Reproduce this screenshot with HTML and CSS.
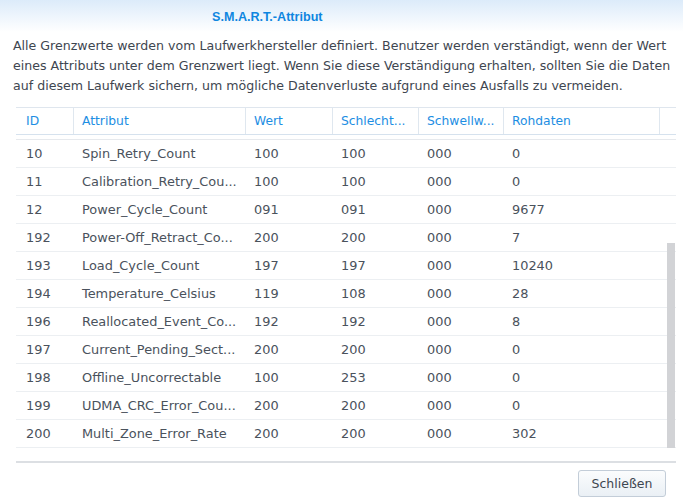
FILE: index.html
```html
<!DOCTYPE html>
<html lang="de">
<head>
<meta charset="utf-8">
<link rel="stylesheet" href="styles.css">
</head>
<body>
<div class="dialog">
  <div class="header"><span class="title">S.M.A.R.T.-Attribut</span></div>
  <p class="desc">Alle Grenzwerte werden vom Laufwerkhersteller definiert. Benutzer werden verständigt, wenn der Wert<br>eines Attributs unter dem Grenzwert liegt. Wenn Sie diese Verständigung erhalten, sollten Sie die Daten<br>auf diesem Laufwerk sichern, um mögliche Datenverluste aufgrund eines Ausfalls zu vermeiden.</p>
  <div class="grid">
    <div class="row head">
      <div class="cell">ID</div><div class="cell">Attribut</div><div class="cell">Wert</div><div class="cell">Schlecht...</div><div class="cell">Schwellw...</div><div class="cell">Rohdaten</div><div class="cell last"></div>
    </div>
    <div class="body">
      <div class="row"><div class="cell">10</div><div class="cell">Spin_Retry_Count</div><div class="cell">100</div><div class="cell">100</div><div class="cell">000</div><div class="cell">0</div><div class="cell"></div></div>
      <div class="row"><div class="cell">11</div><div class="cell">Calibration_Retry_Cou...</div><div class="cell">100</div><div class="cell">100</div><div class="cell">000</div><div class="cell">0</div><div class="cell"></div></div>
      <div class="row"><div class="cell">12</div><div class="cell">Power_Cycle_Count</div><div class="cell">091</div><div class="cell">091</div><div class="cell">000</div><div class="cell">9677</div><div class="cell"></div></div>
      <div class="row"><div class="cell">192</div><div class="cell">Power-Off_Retract_Co...</div><div class="cell">200</div><div class="cell">200</div><div class="cell">000</div><div class="cell">7</div><div class="cell"></div></div>
      <div class="row"><div class="cell">193</div><div class="cell">Load_Cycle_Count</div><div class="cell">197</div><div class="cell">197</div><div class="cell">000</div><div class="cell">10240</div><div class="cell"></div></div>
      <div class="row"><div class="cell">194</div><div class="cell">Temperature_Celsius</div><div class="cell">119</div><div class="cell">108</div><div class="cell">000</div><div class="cell">28</div><div class="cell"></div></div>
      <div class="row"><div class="cell">196</div><div class="cell">Reallocated_Event_Co...</div><div class="cell">192</div><div class="cell">192</div><div class="cell">000</div><div class="cell">8</div><div class="cell"></div></div>
      <div class="row"><div class="cell">197</div><div class="cell">Current_Pending_Sect...</div><div class="cell">200</div><div class="cell">200</div><div class="cell">000</div><div class="cell">0</div><div class="cell"></div></div>
      <div class="row"><div class="cell">198</div><div class="cell">Offline_Uncorrectable</div><div class="cell">100</div><div class="cell">253</div><div class="cell">000</div><div class="cell">0</div><div class="cell"></div></div>
      <div class="row"><div class="cell">199</div><div class="cell">UDMA_CRC_Error_Cou...</div><div class="cell">200</div><div class="cell">200</div><div class="cell">000</div><div class="cell">0</div><div class="cell"></div></div>
      <div class="row"><div class="cell">200</div><div class="cell">Multi_Zone_Error_Rate</div><div class="cell">200</div><div class="cell">200</div><div class="cell">000</div><div class="cell">302</div><div class="cell"></div></div>
      <div class="scrollbar"></div>
    </div>
  </div>
  <div class="footer"><button class="btn">Schließen</button></div>
</div>
</body>
</html>
```
FILE: styles.css
```css
html, body { margin: 0; padding: 0; background: #fff; }
body { font-family: "DejaVu Sans", Verdana, sans-serif; width: 683px; height: 502px; overflow: hidden; }
.dialog { width: 683px; height: 502px; }
.header {
  height: 32px;
  background: linear-gradient(#dcebfa, #ffffff);
  padding-left: 212px;
  line-height: 32px;
}
.title {
  font-family: "Liberation Sans", Arial, sans-serif;
  font-weight: bold;
  font-size: 12.6px;
  color: #0f86e0;
}
.desc {
  margin: 4px 0 0 13px;
  font-size: 12.6px;
  line-height: 20px;
  color: #3e4650;
  white-space: nowrap;
}
.grid { margin: 11px 7px 0 16px; }
.row {
  display: grid;
  grid-template-columns: 57px 172px 87px 86px 85px 156px 1fr;
  height: 27px;
  border-bottom: 1px solid #eceff2;
}
.cell {
  padding-left: 10px;
  font-size: 12.9px;
  line-height: 27px;
  color: #4a525c;
  white-space: nowrap;
  overflow: hidden;
}
.cell + .cell { padding-left: 9px; }
.head {
  border-top: 1px solid #dfe6ee;
  border-bottom: 1px solid #d6e2ee;
  height: 26px;
}
.head .cell { color: #1d8ee3; line-height: 26px; font-size: 12.3px; }
.head .cell + .cell { border-left: 1px solid #dfe7ef; padding-left: 8px; }
.body {
  position: relative;
  margin-top: 4px;
  border-top: 1px solid #e6e9ed;
  height: 321px;
  border-bottom: 2px solid #dcdfe3;
}
.scrollbar {
  position: absolute;
  left: 651px;
  top: 103px;
  width: 8px;
  height: 205px;
  background: #d2d3d6;
}
.footer { display: flex; justify-content: flex-end; padding: 7px 17px 0 0; }
.btn {
  width: 88px; height: 27px;
  border: 1px solid #c3cdd8;
  border-radius: 3px;
  background: linear-gradient(#fbfcfd, #eaf0f5);
  font-family: "DejaVu Sans", Verdana, sans-serif;
  font-size: 12.5px;
  color: #3e4650;
  padding: 0;
}
```
